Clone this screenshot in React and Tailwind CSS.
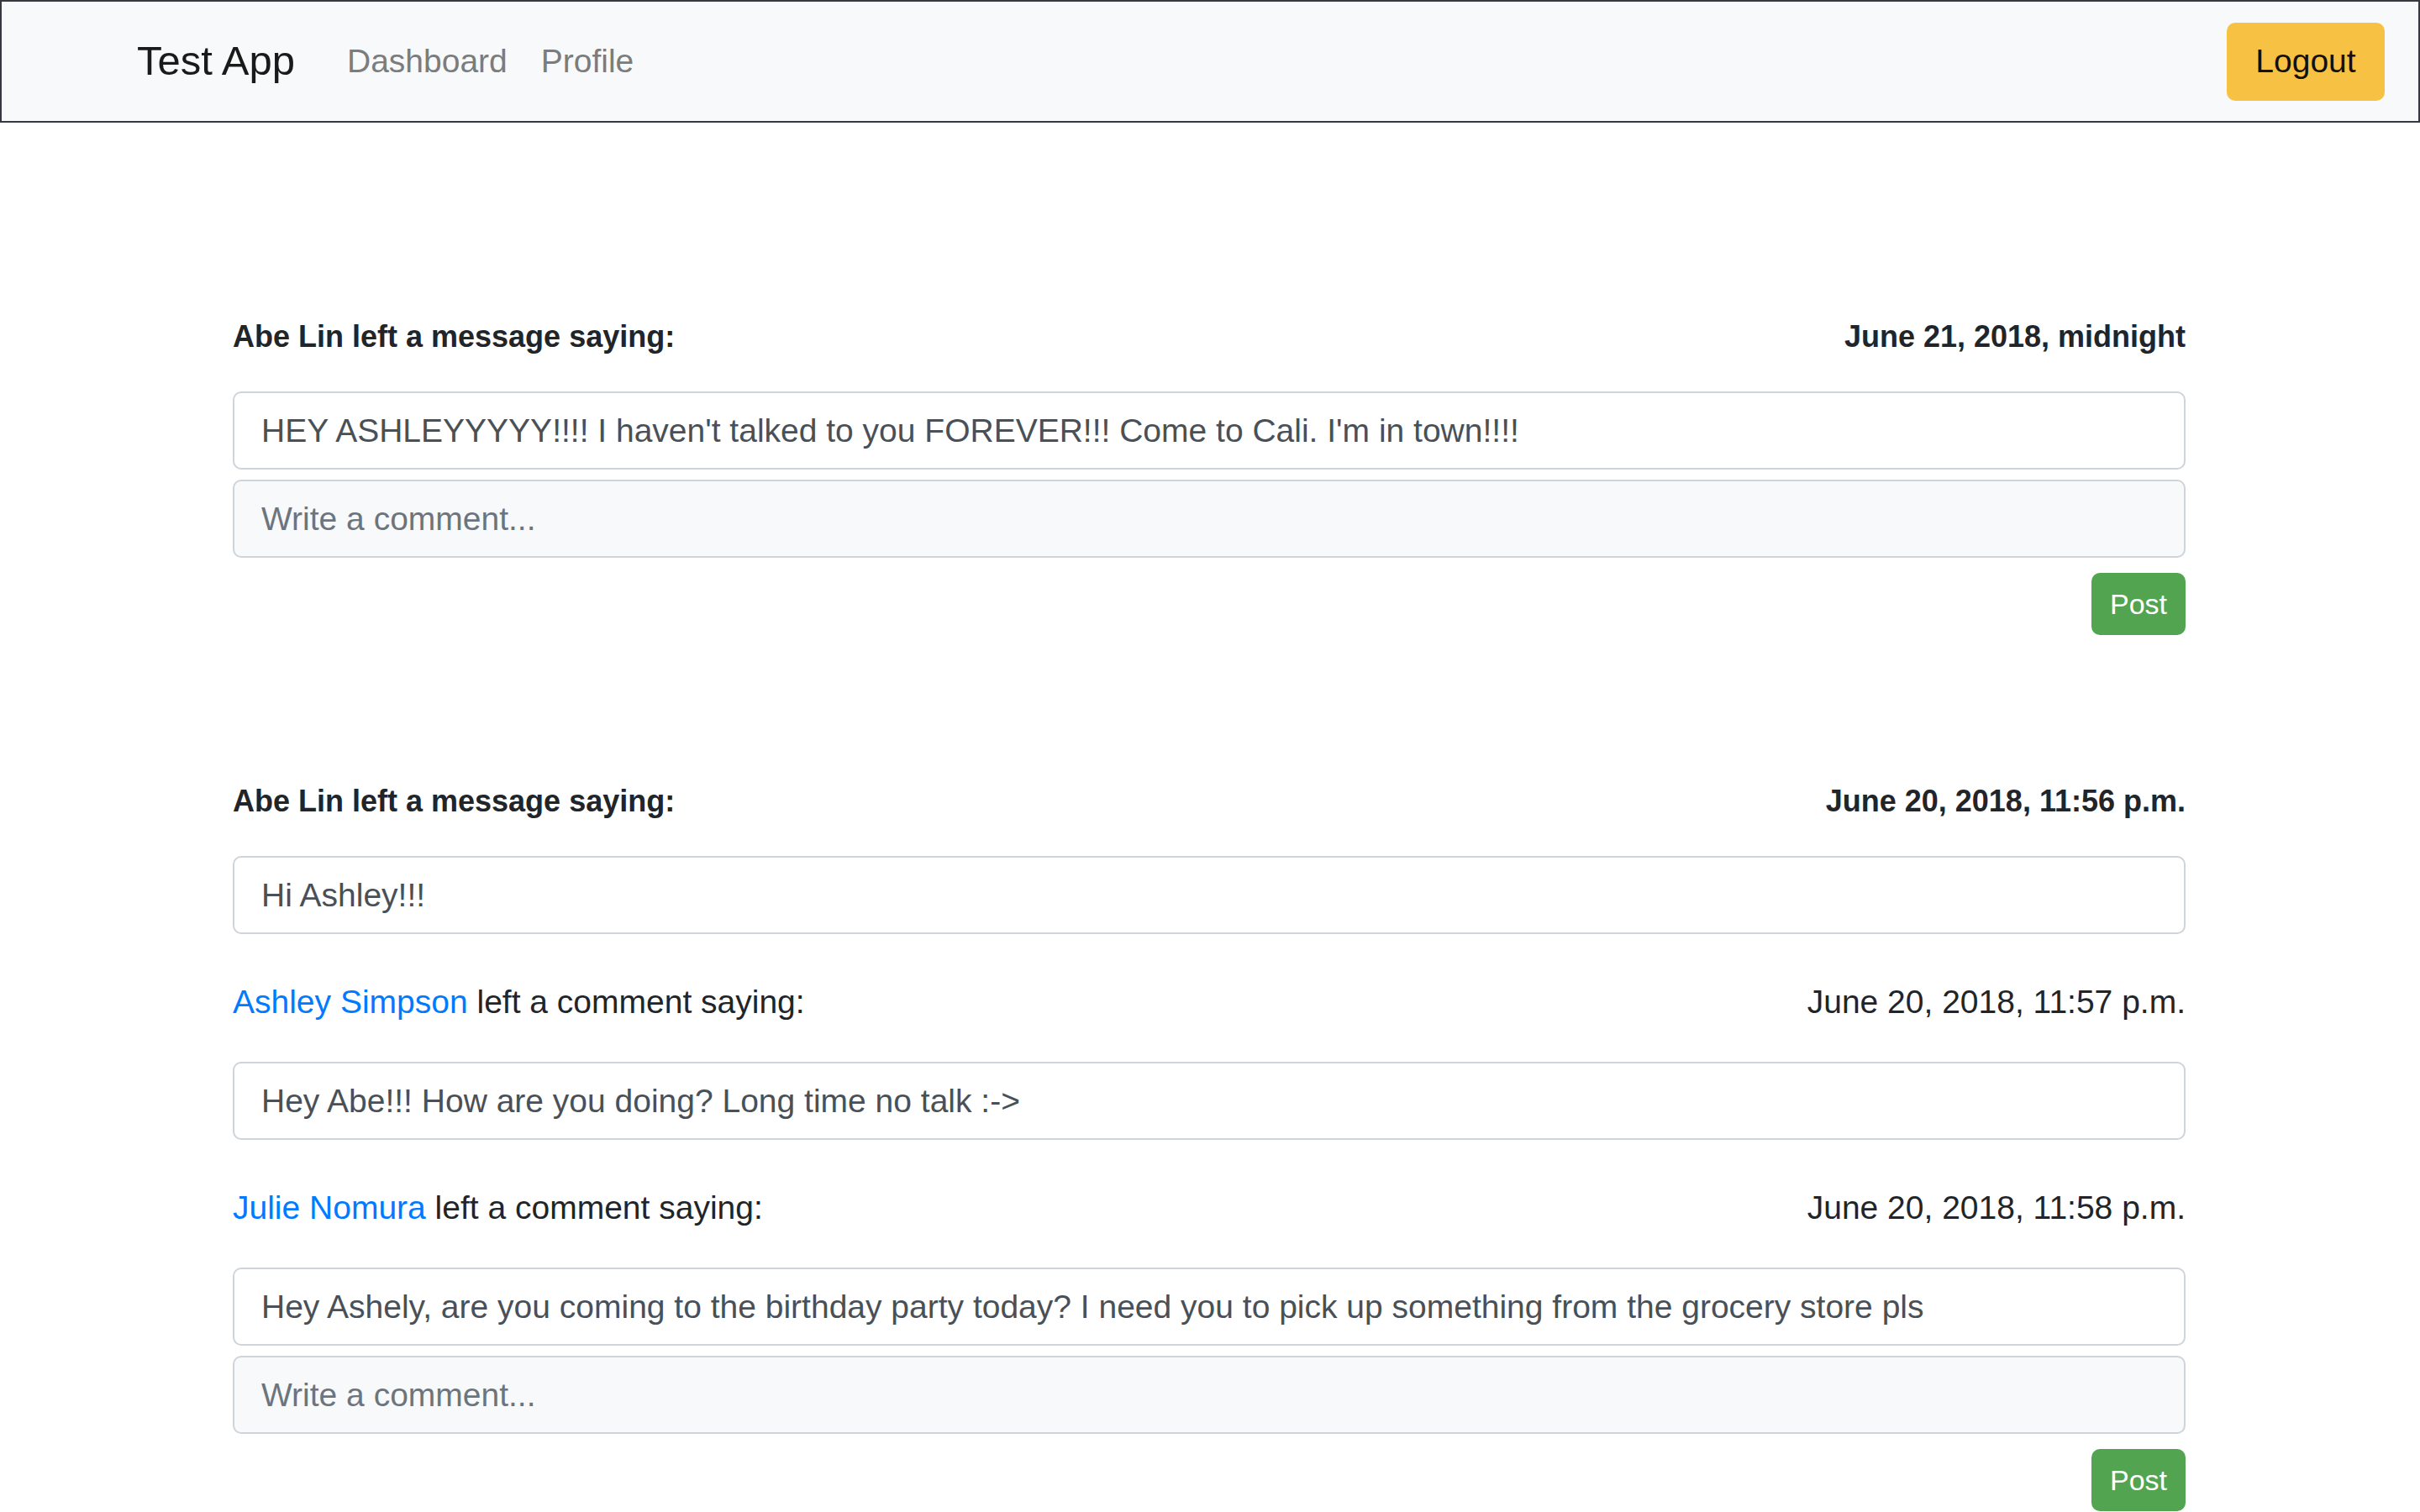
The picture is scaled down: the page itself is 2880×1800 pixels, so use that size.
import React from "react";

const messages = [
  {
    author: "Abe Lin",
    date: "June 21, 2018, midnight",
    text: "HEY ASHLEYYYYY!!!! I haven't talked to you FOREVER!!! Come to Cali. I'm in town!!!!",
    comments: [],
  },
  {
    author: "Abe Lin",
    date: "June 20, 2018, 11:56 p.m.",
    text: "Hi Ashley!!!",
    comments: [
      {
        author: "Ashley Simpson",
        date: "June 20, 2018, 11:57 p.m.",
        text: "Hey Abe!!! How are you doing? Long time no talk :->",
      },
      {
        author: "Julie Nomura",
        date: "June 20, 2018, 11:58 p.m.",
        text: "Hey Ashely, are you coming to the birthday party today? I need you to pick up something from the grocery store pls",
      },
    ],
  },
];

const Navbar = () => (
  <nav className="h-[146px] border-2 border-[#343a40] bg-[#f8f9fa] flex items-center pl-[161px] pr-[40px]">
    <a className="text-[49px] text-[#1a1a1a] mr-[62px]">Test App</a>
    <a className="text-[39px] text-[#7b7c7d] mr-[40px]">Dashboard</a>
    <a className="text-[39px] text-[#7b7c7d]">Profile</a>
    <button className="ml-auto h-[93px] w-[188px] rounded-[10px] bg-[#f7c244] text-[39px] text-[#111]">
      Logout
    </button>
  </nav>
);

const Field = ({ value, placeholder }) => (
  <input
    readOnly
    value={value || ""}
    placeholder={placeholder}
    className={
      "w-full h-[93px] px-[32px] rounded-[10px] border-2 border-[#ced4da] text-[39px] text-[#495057] placeholder:text-[#6c757d] outline-none " +
      (placeholder ? "bg-[#f8f9fa]" : "bg-white")
    }
  />
);

const PostButton = () => (
  <div className="flex justify-end mt-[18px]">
    <button className="h-[74px] w-[112px] rounded-[10px] bg-[#53a451] text-white text-[34px]">Post</button>
  </div>
);

const Message = ({ msg, first }) => (
  <div className={first ? "" : "mt-[176px]"}>
    <div className="flex justify-between items-center h-[44px] text-[36px] font-semibold text-[#212529]">
      <span>{msg.author} left a message saying:</span>
      <span>{msg.date}</span>
    </div>
    <div className="mt-[43px]">
      <Field value={msg.text} />
    </div>

    {msg.comments.map((c, i) => (
      <div key={i}>
        <div className="flex justify-between items-center h-[44px] mt-[59px] text-[39px] text-[#212529]">
          <span>
            <a className="text-[#007bff]">{c.author}</a> left a comment saying:
          </span>
          <span>{c.date}</span>
        </div>
        <div className="mt-[49px]">
          <Field value={c.text} />
        </div>
      </div>
    ))}

    <div className="mt-[12px]">
      <Field placeholder="Write a comment..." />
    </div>
    <PostButton />
  </div>
);

export default function App() {
  return (
    <div className="min-h-screen bg-white font-['Liberation_Sans',Arial,sans-serif]">
      <Navbar />
      <main className="pl-[277px] pr-[279px] pt-[233px] pb-[40px]">
        {messages.map((m, i) => (
          <Message key={i} msg={m} first={i === 0} />
        ))}
      </main>
    </div>
  );
}
